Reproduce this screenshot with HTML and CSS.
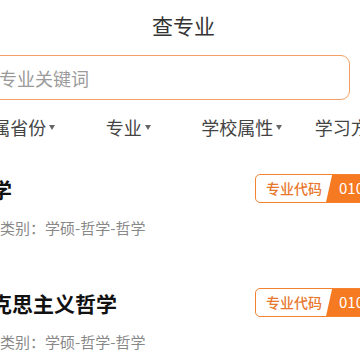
FILE: index.html
```html
<!DOCTYPE html>
<html lang="zh-CN">
<head>
<meta charset="utf-8">
<link rel="stylesheet" href="styles.css">
</head>
<body>
<div class="page">
  <header class="title">查专业</header>
  <div class="search"><span class="placeholder">请输入专业关键词</span></div>
  <nav class="filters">
    <div class="filter">所属省份<span class="caret"></span></div>
    <div class="filter">专业<span class="caret"></span></div>
    <div class="filter">学校属性<span class="caret"></span></div>
    <div class="filter">学习方式<span class="caret"></span></div>
  </nav>
  <ul class="list">
    <li class="item">
      <div class="item-head">
        <span class="name">哲学</span>
        <span class="tag"><span class="tag-label">专业代码</span><span class="tag-code">010100</span></span>
      </div>
      <div class="meta">学科类别：学硕-哲学-哲学</div>
    </li>
    <li class="item">
      <div class="item-head">
        <span class="name">马克思主义哲学</span>
        <span class="tag"><span class="tag-label">专业代码</span><span class="tag-code">010101</span></span>
      </div>
      <div class="meta">学科类别：学硕-哲学-哲学</div>
    </li>
  </ul>
</div>
</body>
</html>
```
FILE: styles.css
```css
html, body {
  margin: 0;
  padding: 0;
  background: #fff;
  overflow: hidden;
}
body {
  font-family: "Noto Sans CJK SC", "Noto Sans", sans-serif;
  color: #333;
}
.page {
  width: 454px;
  margin-left: -42px;
}
.title {
  height: 50px;
  line-height: 50px;
  font-size: 21px;
  text-align: center;
  padding-right: 3px;
  color: #333;
}
.search {
  margin: 5px 62px 0 -28px;
  height: 45px;
  box-sizing: border-box;
  border: 1.5px solid #f2a063;
  border-radius: 9px;
  display: flex;
  align-items: center;
  padding-left: 14px;
}
.placeholder {
  font-size: 18px;
  color: #9a9a9a;
}
.filters {
  display: flex;
  height: 54px;
  align-items: center;
}
.filter {
  flex: 1;
  display: flex;
  justify-content: center;
  align-items: center;
  font-size: 18px;
  color: #444;
}
.caret {
  width: 0;
  height: 0;
  margin-left: 3px;
  border-left: 3.5px solid transparent;
  border-right: 3.5px solid transparent;
  border-top: 5px solid #666;
}
.list {
  list-style: none;
  margin: 0;
  padding: 0;
}
.item {
  padding: 20px 12px 30px;
}
.item-head {
  display: flex;
  justify-content: space-between;
  align-items: center;
  height: 29px;
}
.name {
  font-size: 21px;
  font-weight: 700;
  color: #111;
}
.tag {
  display: flex;
  height: 29px;
  box-sizing: border-box;
  border: 1.5px solid #f5822f;
  border-radius: 5px;
  overflow: hidden;
  font-size: 14px;
  line-height: 26px;
}
.tag-label {
  color: #e8782e;
  font-weight: 500;
  padding: 0 4px 0 10px;
}
.tag-code {
  background: #f57a22;
  color: #fff;
  font-size: 15px;
  padding: 0 10px 0 13px;
  clip-path: polygon(6px 0, 100% 0, 100% 100%, 0 100%);
}
.meta {
  margin-top: 15px;
  font-size: 15px;
  line-height: 20px;
  color: #888;
}
```
